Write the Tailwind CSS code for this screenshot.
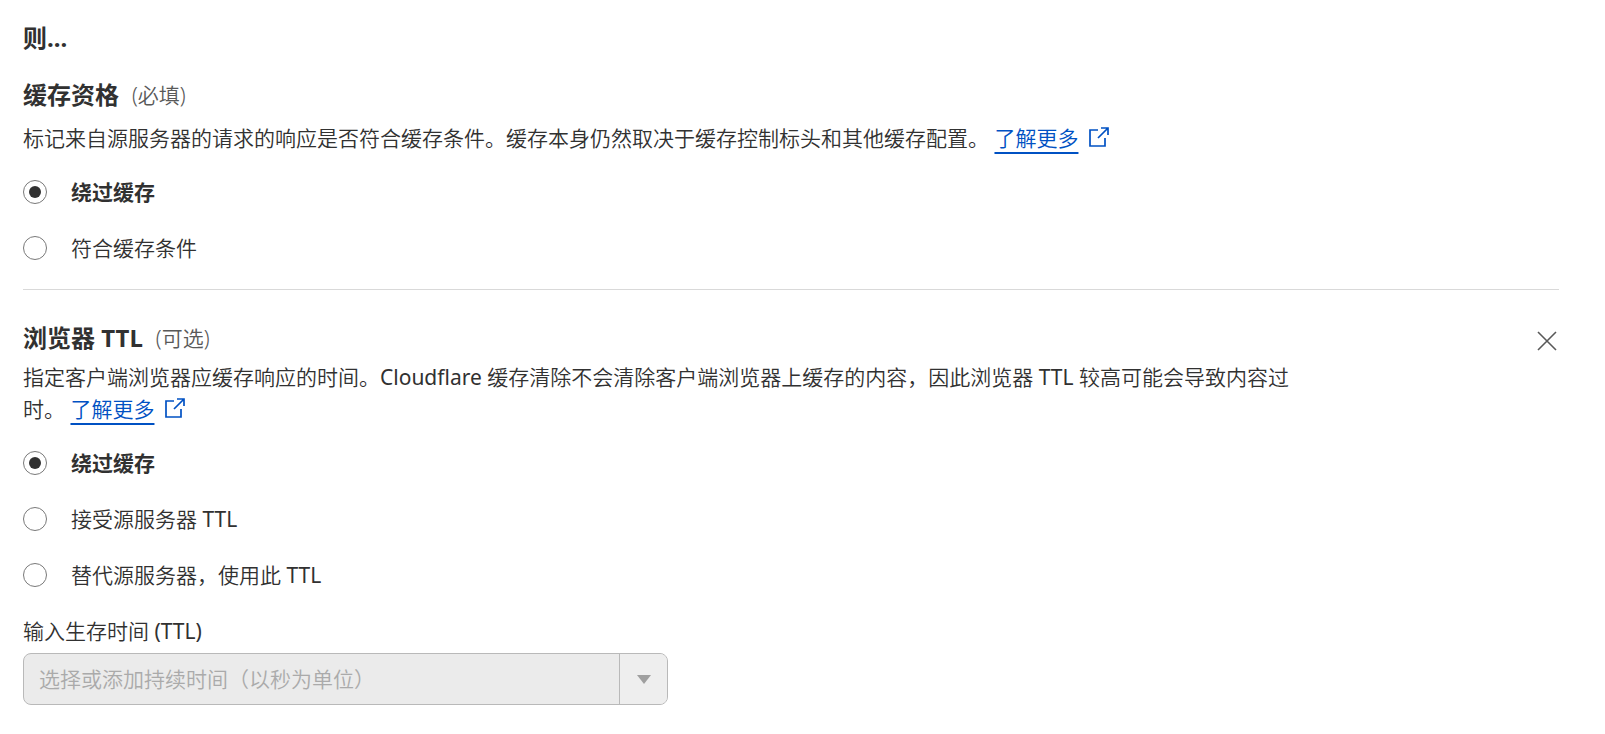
<!DOCTYPE html>
<html lang="zh-CN">
<head>
    <meta charset="UTF-8">
    <meta name="viewport" content="width=device-width, initial-scale=1.0">
    <title>缓存规则</title>
    <script src="https://cdn.jsdelivr.net/npm/@tailwindcss/browser@4"></script>
</head>
<body class="bg-white text-[#313131] text-[21px] leading-8 font-[350] font-['Noto_Sans','Noto_Sans_CJK_SC',sans-serif]">
    <main class="pt-[23px] pb-7 pl-[23px] pr-[46px]">
        <h2 class="text-2xl leading-[30px] font-bold">则...</h2>

        <!-- Cache eligibility -->
        <section class="mt-6 pb-[25px] border-b border-[#d9d9d9]">
            <h3 class="flex items-center gap-[13px] text-2xl leading-9 font-bold">
                缓存资格
                <span class="text-[21px] font-[350] text-[#595959]">(必填)</span>
            </h3>
            <p class="mt-[9px]">
                标记来自源服务器的请求的响应是否符合缓存条件。缓存本身仍然取决于缓存控制标头和其他缓存配置。
                <a href="#" class="text-[#0051c3]"><span class="underline decoration-2 underline-offset-[6px]">了解更多</span><svg class="inline-block w-5 h-5 ml-[11px] -mt-[6px]" viewBox="0 0 20 20" fill="none" stroke="currentColor" stroke-width="1.7" aria-hidden="true"><path d="M9 3H1v16h15v-8"/><path d="M12 1h7v7M19 1L9 11"/></svg></a>
            </p>
            <div class="mt-[22px] flex flex-col items-start gap-6">
                <label class="flex items-center gap-6 font-bold">
                    <input type="radio" name="eligibility" checked class="appearance-none size-6 rounded-full border border-[#797979] p-[5px] bg-clip-content checked:bg-[#313131]">
                    绕过缓存
                </label>
                <label class="flex items-center gap-6">
                    <input type="radio" name="eligibility" class="appearance-none size-6 rounded-full border border-[#797979] p-[5px] bg-clip-content checked:bg-[#313131]">
                    符合缓存条件
                </label>
            </div>
        </section>

        <!-- Browser TTL -->
        <section class="mt-[30px]">
            <div class="flex items-end justify-between">
                <h3 class="flex items-center gap-[13px] text-2xl leading-9 font-bold">
                    浏览器 TTL
                    <span class="text-[21px] font-[350] text-[#595959]">(可选)</span>
                </h3>
                <button type="button" aria-label="移除" class="w-6 h-[30px] flex items-center justify-center text-[#595959]">
                    <svg class="size-5" viewBox="0 0 20 20" fill="none" stroke="currentColor" stroke-width="1.6" aria-hidden="true"><path d="M1 1l18 18M19 1L1 19"/></svg>
                </button>
            </div>
            <p class="mt-[5px] w-5/6">
                指定客户端浏览器应缓存响应的时间。<span class="font-normal">Cloudflare </span>缓存清除不会清除客户端浏览器上缓存的内容，因此浏览器<span class="font-normal"> TTL </span>较高可能会导致内容过时。
                <a href="#" class="text-[#0051c3]"><span class="underline decoration-2 underline-offset-[6px]">了解更多</span><svg class="inline-block w-5 h-5 ml-[11px] -mt-[6px]" viewBox="0 0 20 20" fill="none" stroke="currentColor" stroke-width="1.7" aria-hidden="true"><path d="M9 3H1v16h15v-8"/><path d="M12 1h7v7M19 1L9 11"/></svg></a>
            </p>
            <div class="mt-[22px] flex flex-col items-start gap-6">
                <label class="flex items-center gap-6 font-bold">
                    <input type="radio" name="browser-ttl" checked class="appearance-none size-6 rounded-full border border-[#797979] p-[5px] bg-clip-content checked:bg-[#313131]">
                    绕过缓存
                </label>
                <label class="flex items-center gap-6">
                    <input type="radio" name="browser-ttl" class="appearance-none size-6 rounded-full border border-[#797979] p-[5px] bg-clip-content checked:bg-[#313131]">
                    <span>接受源服务器<span class="font-normal"> TTL</span></span>
                </label>
                <label class="flex items-center gap-6">
                    <input type="radio" name="browser-ttl" class="appearance-none size-6 rounded-full border border-[#797979] p-[5px] bg-clip-content checked:bg-[#313131]">
                    <span>替代源服务器，使用此<span class="font-normal"> TTL</span></span>
                </label>
            </div>

            <label for="ttl" class="block mt-6">输入生存时间<span class="font-normal"> (TTL)</span></label>
            <div class="mt-[6px] flex h-[52px] max-w-[645px] rounded-lg border border-[#b9b9b9] bg-[#ebebeb] overflow-hidden">
                <input id="ttl" type="text" disabled placeholder="选择或添加持续时间（以秒为单位）" class="flex-1 min-w-0 px-[15px] placeholder:text-[#aaaaaa]">
                <button type="button" disabled aria-label="展开选项" class="w-12 flex items-center justify-center border-l border-[#b9b9b9] bg-[#eeeeee] text-[#9f9f9f]">
                    <svg class="w-[14px] h-[9px]" viewBox="0 0 14 9" fill="currentColor" aria-hidden="true"><path d="M0 0h14L7 9z"/></svg>
                </button>
            </div>
        </section>
    </main>
</body>
</html>
